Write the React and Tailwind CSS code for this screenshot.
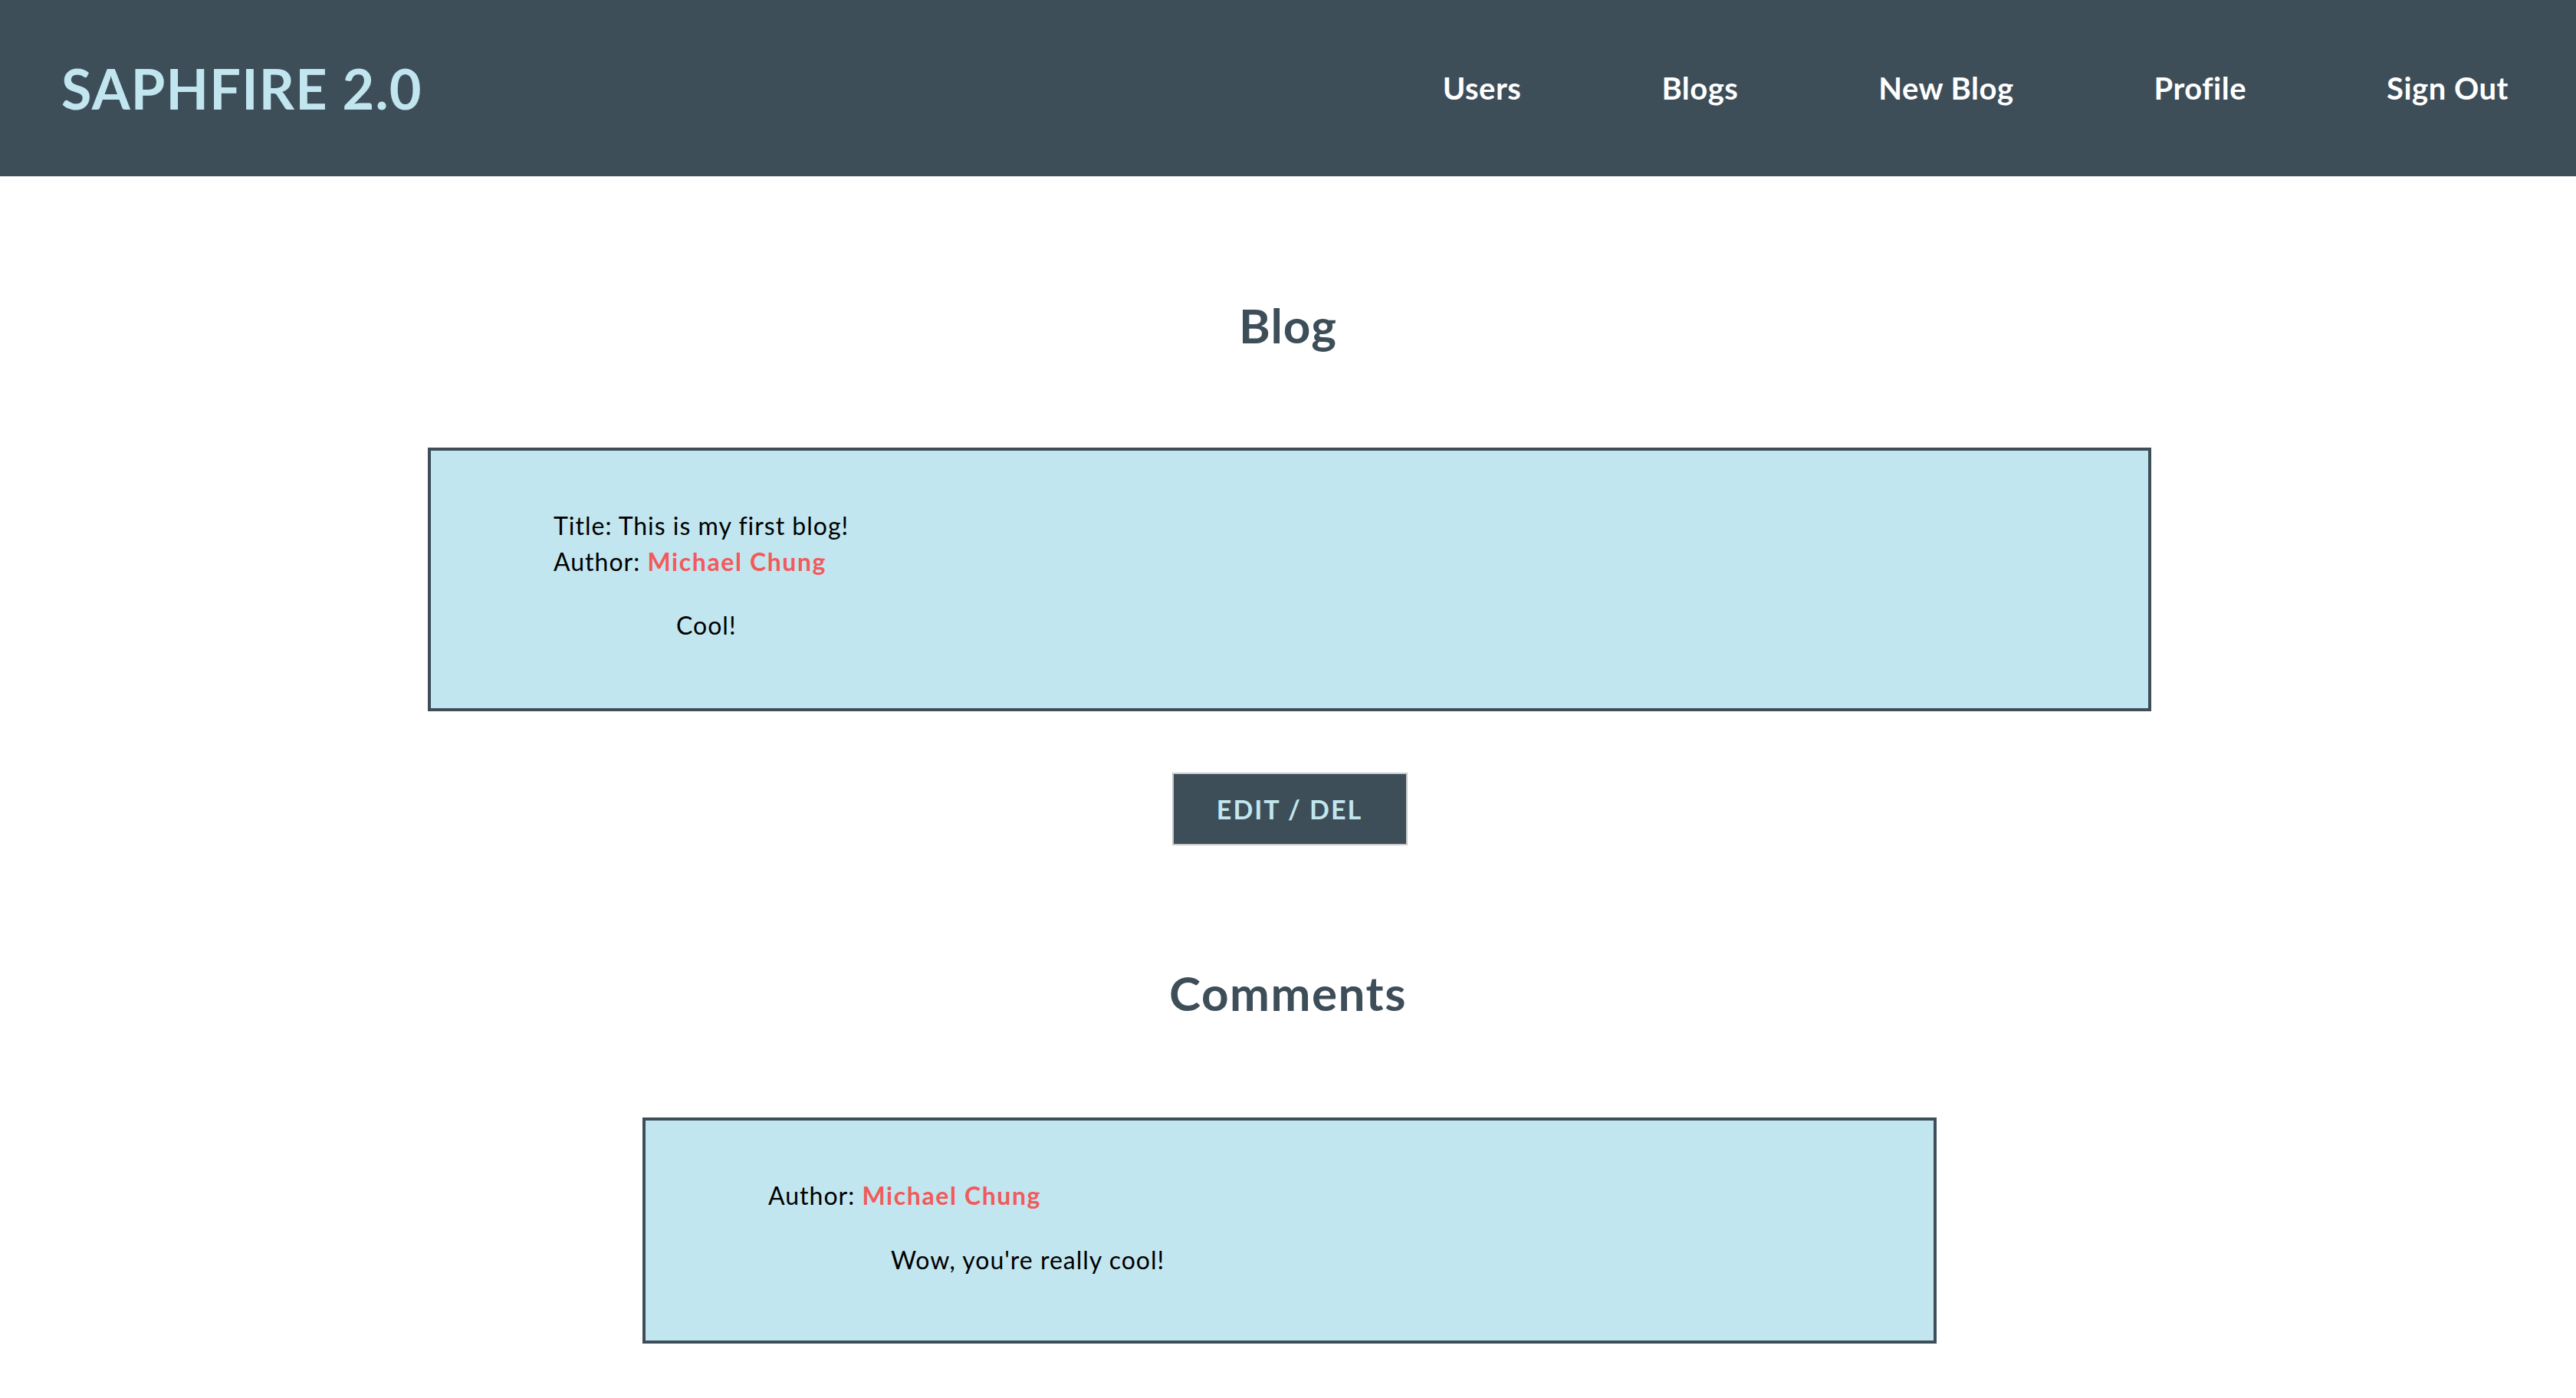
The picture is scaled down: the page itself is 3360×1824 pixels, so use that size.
const NAV = ['Users', 'Blogs', 'New Blog', 'Profile', 'Sign Out']

function Header() {
  return (
    <header className="flex h-[230px] items-center justify-between bg-[#3d4e59] pl-[80px] pr-[88px]">
      <div className="text-[72px] leading-none font-bold text-[#c2e6ef] tracking-[1.2px]">SAPHFIRE 2.0</div>
      <nav className="flex gap-[183px]">
        {NAV.map(n => (
          <a key={n} className="text-[40px] leading-none font-bold text-white tracking-[0.5px]">{n}</a>
        ))}
      </nav>
    </header>
  )
}

function Author({ name }) {
  return (
    <div>
      Author: <span className="font-bold text-[#f25a5b] tracking-[1.6px]">{name}</span>
    </div>
  )
}

export default function App() {
  return (
    <div className="min-h-screen bg-white font-['Lato',sans-serif] text-black">
      <Header />

      <main className="flex flex-col items-center pb-[68px]">
        <h2 className="mt-[163px] text-[62px] leading-[62px] font-bold tracking-[1px] text-[#3d4e59]">Blog</h2>

        {/* blog card */}
        <div className="mt-[129px] w-[2248px] translate-x-[2px] border-4 border-[#3d4e59] bg-[#c2e6ef] pl-[160px] pt-[74px] pb-[85px] text-[32px] leading-[47px] tracking-[1px]">
          <div>Title: This is my first blog!</div>
          <Author name="Michael Chung" />
          <p className="mt-[36px] pl-[160px]">Cool!</p>
        </div>

        <button className="mt-[80px] h-[95px] w-[307px] translate-x-[2px] border-2 border-[#c9c9c9] bg-[#3d4e59] text-[34px] font-bold tracking-[2px] text-[#c2e6ef]">
          EDIT / DEL
        </button>

        <h2 className="mt-[161px] text-[62px] leading-[62px] font-bold tracking-[1.5px] text-[#3d4e59]">Comments</h2>

        {/* comments */}
        <div className="mt-[132px] w-[1688px] translate-x-[2px] border-4 border-[#3d4e59] bg-[#c2e6ef] pl-[160px] pt-[74px] pb-[82px] text-[32px] leading-[47px] tracking-[1px]">
          <Author name="Michael Chung" />
          <p className="mt-[37px] pl-[160px]">Wow, you're really cool!</p>
        </div>
      </main>
    </div>
  )
}
